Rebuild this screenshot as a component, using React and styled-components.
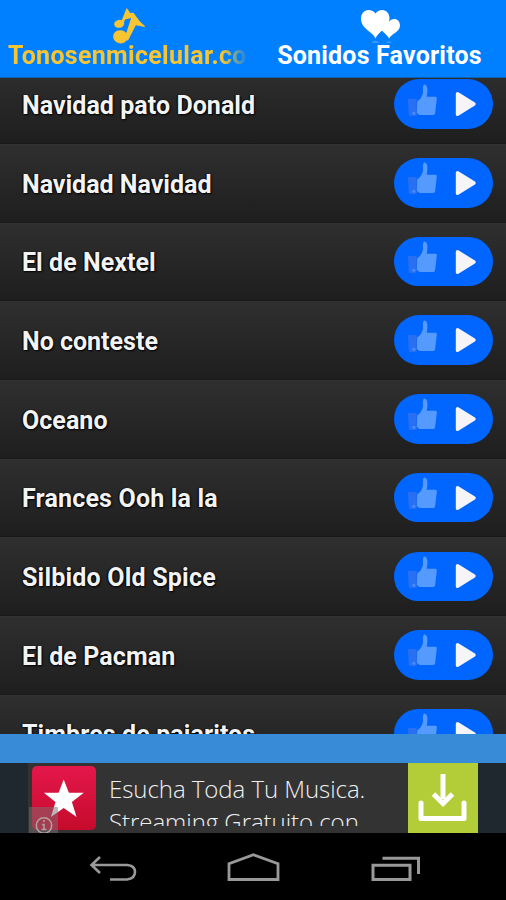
import React from 'react';
import styled, { createGlobalStyle } from 'styled-components';

const GlobalStyle = createGlobalStyle`
  * {
    box-sizing: border-box;
  }
  body {
    margin: 0;
    background: #000;
    font-family: Roboto, sans-serif;
  }
`

const Root = styled.div`
  width: 506px;
  height: 900px;
  display: flex;
  flex-direction: column;
  overflow: hidden;
  background: #000;
`

const TabBar = styled.div`
  display: grid;
  grid-template-columns: 1fr 1fr;
  flex: none;
  height: 78px;
  background: #007fff;
  border-bottom: 1px solid #0a62b8;
`

const Tab = styled.div`
  display: flex;
  flex-direction: column;
  align-items: center;
  min-width: 0;
  padding: 7px 6px 0 8px;
  color: ${(props) => props.$color};

  svg {
    display: block;
    flex: none;
  }
`

const TabLabel = styled.div`
  width: 100%;
  height: 34px;
  margin-top: -6px;
  overflow: hidden;
  white-space: nowrap;
  text-align: ${(props) => (props.$fade ? 'left' : 'center')};
  text-indent: ${(props) => (props.$fade ? 0 : -2)}px;
  font-size: 25px;
  font-weight: 700;
  line-height: 34px;
  letter-spacing: ${(props) => props.$spacing}px;
  mask-image: ${(props) => (props.$fade ? 'linear-gradient(to right, #000 214px, transparent 241px)' : 'none')};
`

const List = styled.div`
  flex: none;
  height: 656px;
  overflow: hidden;
  background: #222;
`

const Rows = styled.div`
  margin-top: -12.7px;
`

const Row = styled.div`
  display: flex;
  align-items: center;
  justify-content: space-between;
  height: 78.7px;
  padding: 0 13.5px 0 22px;
  background: linear-gradient(#2f2f2f, #1e1e1e);
  border-top: 1px solid #323232;
  border-bottom: 1px solid #191919;
`

const Name = styled.div`
  padding-top: 2.5px;
  color: #f3f3f3;
  font-size: 25px;
  font-weight: 700;
  line-height: 34px;
  letter-spacing: ${(props) => props.$spacing}px;
  text-shadow: 1px 1px 2px #000, -1px 0 1px #000;
`

const Pill = styled.div`
  display: flex;
  align-items: center;
  width: 98.5px;
  height: 49.5px;
  margin-bottom: 1px;
  padding-left: 13px;
  gap: 15px;
  border-radius: 25px;
  background: #0066ff;

  svg {
    display: block;
  }
  svg:first-child {
    margin-bottom: 9px;
  }
`

const Stripe = styled.div`
  flex: none;
  height: 29px;
  background: #388bd7;
`

const AdBar = styled.div`
  display: flex;
  justify-content: center;
  flex: none;
  height: 70px;
  background: #20282f;
`

const Ad = styled.div`
  position: relative;
  display: flex;
  width: 450px;
  height: 70px;
  padding-left: 4px;
  background: #333;
`

const AdIcon = styled.div`
  width: 64px;
  height: 64px;
  margin-top: 3px;
  border-radius: 5px;
  background: linear-gradient(#e5174c, #c50b2c);
`

const AdInfo = styled.div`
  position: absolute;
  left: 1px;
  bottom: 0;
  width: 29px;
  height: 26px;
  overflow: hidden;
  background: rgba(125, 112, 115, 0.5);
`

const AdText = styled.div`
  flex: 1;
  height: 54px;
  margin-top: 9px;
  padding-left: 13px;
  overflow: hidden;
  white-space: nowrap;
  color: #f0f0f0;
  font-family: "Open Sans", sans-serif;
  font-size: 24px;
  font-weight: 300;
  line-height: 33px;
`

const AdLine = styled.div`
  letter-spacing: ${(props) => props.$spacing}px;
`

const Download = styled.div`
  width: 70px;
  height: 70px;
  background: #b2cd38;
`

const NavBar = styled.div`
  display: flex;
  align-items: flex-start;
  justify-content: space-between;
  flex: 1;
  padding: 20px 85px 0 89px;
  background: #000;
`

const NoteIcon = () => (
  <svg width="34" height="38" viewBox="111 7 34 38" fill="currentColor">
    <ellipse cx="119.2" cy="23.8" rx="5.1" ry="4" transform="rotate(-12 119.2 23.8)" />
    <ellipse cx="120.5" cy="36.8" rx="7.4" ry="6.6" transform="rotate(10 120.5 36.8)" />
    <path d="M126.7 8l3.600 5 3.200-.2 6 8.200 6.200 6-9.900-1.700-7.900 15.500-3.300-2.500 6.500-20.200-6 1.500-3.200 8.200-2.200-2.500z" />
  </svg>
);

const HeartsIcon = () => (
  <svg width="40" height="38" viewBox="361 7 40 38" fill="currentColor">
    <path d="M375.500 38.500c-2.500-6.500-14.500-10-14.500-19.500 0-5.500 3-9 7.500-9 3 0 5.500 1.500 7 3.500 1.500-2.200 4-3.500 6.500-3.500 4.500 0 7.500 3.500 7.500 8.500 0 9-11.500 13-14 20z" />
    <path d="M389 38.500c-2-5-9.500-7.500-9.500-13.500 0-3.500 2-6 5-6 2 0 3.700 1 4.700 2.500 1-1.500 2.800-2.500 4.800-2.500 3.600 0 6 2.700 6 6.500 0 6.500-9 8.500-11 13z" />
    <path d="M371 43q4-5 9 0zM386 43q3-4 6 0z" opacity=".2" />
  </svg>
);

const ThumbIcon = () => (
  <svg width="31" height="34" viewBox="0 0 32 36" preserveAspectRatio="none">
    <path d="M1 17h9v18H2z" fill="#286ff2" />
    <circle cx="7" cy="32" r="1.6" fill="#4b8cff" />
    <path d="M10.500 19.500q5-3.500 6-9.500V4q.4-2.800 2.300-2.200c2.800.8 2.700 7 1.500 12.700h9.200q1.600.2 1.300 2l-1.800 15.500q-.4 2-2.300 2H14q-2-.2-3.800-2.500z" fill="#549aff" />
  </svg>
);

const PlayIcon = () => (
  <svg width="24" height="28" viewBox="0 0 24 28">
    <path d="M4.500 3.700l16.500 10.300-16.500 10.300z" fill="#f5f5f8" stroke="#f5f5f8" strokeWidth="3.400" strokeLinejoin="round" />
  </svg>
);

const StarIcon = () => (
  <svg width="64" height="64" viewBox="0 0 64 64">
    <path d="M31.700 13.500l5.200 13.200 14.900.1-11.900 9.100 4.700 15-12.900-8.800-12.800 8.800 4.600-15-11.600-9.100 14.700-.1z" fill="#fff" />
  </svg>
);

const InfoIcon = () => (
  <svg width="29" height="26" viewBox="0 0 29 26" fill="none" stroke="#b5a0a4" strokeWidth="1.5">
    <circle cx="15" cy="18.500" r="7.700" />
    <path d="M15 13v2M13 17.500h2v5M12.500 22.500h5" />
  </svg>
);

const DownloadIcon = () => (
  <svg width="70" height="70" viewBox="0 0 70 70" fill="none" stroke="#fff">
    <path d="M35 11v25" strokeWidth="5" />
    <path d="M25.500 31L35 40.500l9.500-9.500" strokeWidth="5" />
    <path d="M13 40v15.500h43V40" strokeWidth="5" strokeLinecap="round" strokeLinejoin="round" />
  </svg>
);

const BackIcon = () => (
  <svg width="48" height="30" viewBox="89 853 48 30" fill="none" stroke="#999" strokeWidth="2.6">
    <path d="M92 865h35q8 .5 8 7t-8 7.500h-17M100 857l-8.500 8 8.500 8" />
  </svg>
);

const HomeIcon = () => (
  <svg width="54" height="30" viewBox="227 853 54 30" fill="none" stroke="#999" strokeWidth="2.800">
    <path d="M229 879.500v-15.800l24.500-8.900 24.500 8.900v15.800z" />
  </svg>
);

const RecentIcon = () => (
  <svg width="50" height="30" viewBox="371 853 50 30" fill="none" stroke="#999" strokeWidth="3">
    <path d="M373 865.200h37v14.300h-37zM382.500 858.300h36v15.700" />
  </svg>
);

const tones = [
  { name: 'Navidad pato Donald', spacing: 0.05 },
  { name: 'Navidad Navidad', spacing: 0 },
  { name: 'El de Nextel', spacing: 0.05 },
  { name: 'No conteste', spacing: 0 },
  { name: 'Oceano', spacing: 0.05 },
  { name: 'Frances Ooh la la', spacing: 0.17 },
  { name: 'Silbido Old Spice', spacing: 0.2 },
  { name: 'El de Pacman', spacing: 0.1 },
  { name: 'Timbres de pajaritos', spacing: 0.1 },
];

const App = () => {
  return (
    <Root>
      <GlobalStyle />
      <TabBar>
        <Tab $color="#f7c531">
          <NoteIcon />
          <TabLabel $fade $spacing={0.3}>Tonosenmicelular.com</TabLabel>
        </Tab>
        <Tab $color="#fff">
          <HeartsIcon />
          <TabLabel $spacing={0.2}>Sonidos Favoritos</TabLabel>
        </Tab>
      </TabBar>
      <List>
        <Rows>
          {tones.map((tone) => (
            <Row key={tone.name}>
              <Name $spacing={tone.spacing}>{tone.name}</Name>
              <Pill>
                <ThumbIcon />
                <PlayIcon />
              </Pill>
            </Row>
          ))}
        </Rows>
      </List>
      <Stripe />
      <AdBar>
        <Ad>
          <AdIcon><StarIcon /></AdIcon>
          <AdInfo><InfoIcon /></AdInfo>
          <AdText>
            <AdLine $spacing={-0.05}>Esucha Toda Tu Musica.</AdLine>
            <AdLine $spacing={-0.05}>Streaming Gratuito con</AdLine>
          </AdText>
          <Download><DownloadIcon /></Download>
        </Ad>
      </AdBar>
      <NavBar>
        <BackIcon />
        <HomeIcon />
        <RecentIcon />
      </NavBar>
    </Root>
  );
};

export default App;
